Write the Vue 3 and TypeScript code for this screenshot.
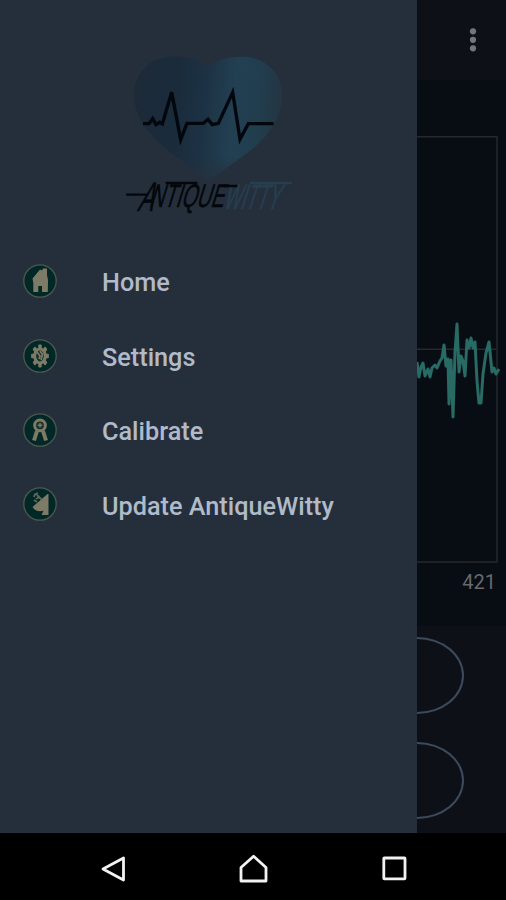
<script setup lang="ts">
type IconName = 'home' | 'settings' | 'calibrate' | 'update'

interface MenuItem {
  icon: IconName
  label: string
}

const items: MenuItem[] = [
  { icon: 'home', label: 'Home' },
  { icon: 'settings', label: 'Settings' },
  { icon: 'calibrate', label: 'Calibrate' },
  { icon: 'update', label: 'Update AntiqueWitty' },
]

const teeth: number[] = [0, 45, 90, 135, 180, 225, 270, 315]
</script>

<template>
  <div class="screen">
    <div class="content">
      <aside class="drawer">
        <svg class="logo" viewBox="0 0 600 540" aria-label="AntiqueWitty">
          <defs>
            <linearGradient id="heart" x1="0" x2="1" y1="0" y2="0.08">
              <stop offset="0" stop-color="#1d2a38" />
              <stop offset="0.3" stop-color="#1a2b3b" />
              <stop offset="0.5" stop-color="#1c3244" />
              <stop offset="0.7" stop-color="#224052" />
              <stop offset="0.86" stop-color="#213e4f" />
              <stop offset="1" stop-color="#243643" />
            </linearGradient>
            <linearGradient id="tip" x1="0" x2="0" y1="0" y2="1">
              <stop offset="0.8" stop-color="#252f3b" stop-opacity="0" />
              <stop offset="1" stop-color="#252f3b" stop-opacity="0.75" />
            </linearGradient>
          </defs>
          <g v-for="paint in ['heart', 'tip']" :key="paint">
            <path
              :fill="`url(#${paint})`"
              d="M293 84C265 57 226 47 187 49C116 53 72 103 72 162C72 220 98 262 151 312C187 346 234 377 263 401Q280 416 296 421Q309 413 324 402C362 374 410 344 446 310C494 264 517 217 516 158C514 99 464 50 398 50C356 50 317 58 293 84Z"
            />
          </g>
          <path
            class="pulse"
            d="M99 251H117L128 236L138 254L149 247L157 252L185 157L212 299L231 250H280L294 238L307 254L325 250L368 157L390 298L415 251H491"
          />
          <g class="wordmark">
            <text transform="translate(80 512) skewX(-20)" font-size="124" textLength="46" lengthAdjust="spacingAndGlyphs">A</text>
            <text transform="translate(117 501) skewX(-17)" font-size="98" textLength="222" lengthAdjust="spacingAndGlyphs">NTIQUE</text>
            <text class="witty" transform="translate(338 508) skewX(-18)" font-size="106" textLength="166" lengthAdjust="spacingAndGlyphs">WITTY</text>
          </g>
          <path class="stroke-dark" d="M48 464H112M167 429H262M340 438H382" />
          <path class="stroke-light" d="M420 429H546" />
        </svg>

        <nav class="menu">
          <a v-for="item in items" :key="item.icon" class="item">
            <svg class="icon" viewBox="0 0 34 34">
              <circle class="disc" cx="17" cy="17" r="16.2" />
              <path
                v-if="item.icon === 'home'"
                class="shape"
                d="M9.5 14.5L17 5.5L19 6.5L20 4.5H24V11L25 16L24.8 28H19V22H15.3V28H10.3V19Z"
              />
              <g v-else-if="item.icon === 'settings'">
                <rect
                  v-for="angle in teeth"
                  :key="angle"
                  class="shape"
                  x="14.6"
                  y="5"
                  width="4.8"
                  height="5"
                  rx="1.2"
                  :transform="`translate(17 17) scale(0.74 0.96) rotate(${angle}) translate(-17 -17)`"
                />
                <ellipse class="gear" cx="17" cy="17" rx="5.3" ry="7" />
                <path class="tool" d="M14 13L17 17L16 20M17 12L19.5 15.5L18 21" />
              </g>
              <g v-else-if="item.icon === 'calibrate'">
                <path class="ribbon" d="M14 18L11 27.5M20 18L23 27.5" />
                <circle class="medal" cx="17" cy="12.3" r="5.4" />
                <path class="star" d="M17 10V14.6M14.7 12.3H19.3" />
              </g>
              <g v-else>
                <path class="shape" d="M24.5 7L9.5 20C12 24 16 25 20.5 23.8L18.5 28H25.5V7Z" />
                <path class="signal" d="M11 10Q11.5 6.5 15 6.5M13 12L17 9.5M14 8L19 13M11 13L14 15" />
              </g>
            </svg>
            <span class="label">{{ item.label }}</span>
          </a>
        </nav>
      </aside>

      <main class="page">
        <header class="toolbar">
          <svg class="more" viewBox="0 0 8 26">
            <circle cx="4" cy="4.3" r="3.1" />
            <circle cx="4" cy="12.8" r="3.1" />
            <circle cx="4" cy="21.3" r="3.1" />
          </svg>
        </header>
        <section class="chart">
          <svg class="plot" viewBox="417 130 89 438">
            <path class="grid" d="M417 136.7H497V562H417M417 349.3H497" />
            <path
              class="trace"
              d="M417 362L419 377L421 367L423 363L425 376L428 369L430 377L432 368L435 365L437 368L440 361L442 358L444 345L446 366L448 359L449 404L451 360L453 417L455 352L457 324L459 372L461 356L463 361L465 376L467 340L469 348L471 338L473 348L475 342L477 381L479 403L481 403L483 374L486 353L489 342L492 372L494 368L496 374L499 369"
            />
          </svg>
          <span class="axis">421</span>
        </section>
        <section class="actions">
          <span class="button"></span>
          <span class="button"></span>
        </section>
      </main>
    </div>

    <footer class="system">
      <svg class="key" viewBox="0 0 30 30"><path d="M24.5 4V26L4 15Z" /></svg>
      <svg class="key" viewBox="0 0 30 30"><path d="M2 13.5L14.6 2.2L27 13.5V27H2Z" /></svg>
      <svg class="key" viewBox="0 0 30 30"><rect x="4.8" y="4" width="21.2" height="20.8" rx="0.5" /></svg>
    </footer>
  </div>
</template>

<style>
body {
  background: #000;
}
</style>

<style scoped>
.screen {
  display: flex;
  flex-direction: column;
  width: 506px;
  height: 900px;
  overflow: hidden;
  font-family: Roboto, "Liberation Sans", sans-serif;
}
.content {
  display: grid;
  grid-template-columns: 417px 89px;
  height: 833px;
}
.drawer {
  background: #252f3b;
  padding-top: 40px;
}
.logo {
  display: block;
  width: 200px;
  height: 180px;
  margin-left: 110px;
  overflow: visible;
}
.pulse {
  fill: none;
  stroke: #02070d;
  stroke-width: 10;
}
.wordmark {
  font-family: "Liberation Sans", sans-serif;
  fill: #03070c;
  stroke: #03070c;
  stroke-width: 1.5;
}
.wordmark .witty {
  fill: #263f50;
  stroke: #263f50;
}
.stroke-dark,
.stroke-light {
  fill: none;
  stroke: #03070c;
  stroke-width: 7;
}
.stroke-light {
  stroke: #263f50;
}
.menu {
  margin-top: 24px;
}
.item {
  display: flex;
  align-items: center;
  height: 74.4px;
  padding-left: 23px;
}
.icon {
  width: 34px;
  height: 34px;
  flex: none;
}
.disc {
  fill: #012727;
  stroke: #4c594f;
  stroke-width: 1.3;
}
.shape {
  fill: #7d7b65;
}
.gear {
  fill: #0e2d2b;
  stroke: #7d7b65;
  stroke-width: 3;
}
.tool,
.signal {
  fill: none;
  stroke: #7d7b65;
  stroke-width: 1.8;
}
.signal {
  stroke: #5f6857;
}
.ribbon {
  fill: none;
  stroke: #7d7b65;
  stroke-width: 4;
}
.medal {
  fill: #17302c;
  stroke: #7d7b65;
  stroke-width: 3;
}
.star {
  stroke: #7d7b65;
  stroke-width: 1.5;
}
.label {
  margin: 4px 0 0 45px;
  font-size: 25.25px;
  font-weight: 500;
  line-height: 30px;
  white-space: nowrap;
  color: #b1bac9;
}
.item:last-child .label {
  margin-top: 5px;
}
.page {
  display: flex;
  flex-direction: column;
  background: #0d1117;
}
.toolbar {
  display: flex;
  justify-content: flex-end;
  height: 80px;
  padding: 27px 29px 0 0;
  box-sizing: border-box;
}
.more {
  width: 8px;
  height: 26px;
  fill: #74777a;
}
.chart {
  display: flex;
  flex-direction: column;
  align-items: flex-end;
  height: 546px;
  padding-top: 50px;
  box-sizing: border-box;
  background: #080c13;
}
.plot {
  width: 89px;
  height: 438px;
}
.grid {
  fill: none;
  stroke: #25292d;
  stroke-width: 1.5;
}
.trace {
  fill: none;
  stroke: #286a64;
  stroke-width: 3;
  stroke-linejoin: round;
}
.axis {
  margin: 2px 10px 0 0;
  font-size: 20px;
  line-height: 24px;
  color: #68696b;
}
.actions {
  display: grid;
  gap: 28.5px;
  padding-top: 10.5px;
  overflow: hidden;
}
.button {
  width: 47px;
  height: 77px;
  box-sizing: border-box;
  border: 2.5px solid #3d4a5b;
  border-left: 0;
  border-radius: 0 47px 47px 0 / 0 38.5px 38.5px 0;
}
.system {
  display: flex;
  justify-content: space-between;
  height: 67px;
  padding: 20.5px 97px 0 99px;
  box-sizing: border-box;
  background: #000;
}
.key {
  width: 30px;
  height: 30px;
  fill: none;
  stroke: #f2f2f2;
  stroke-width: 2.8;
  stroke-linejoin: round;
}
</style>
